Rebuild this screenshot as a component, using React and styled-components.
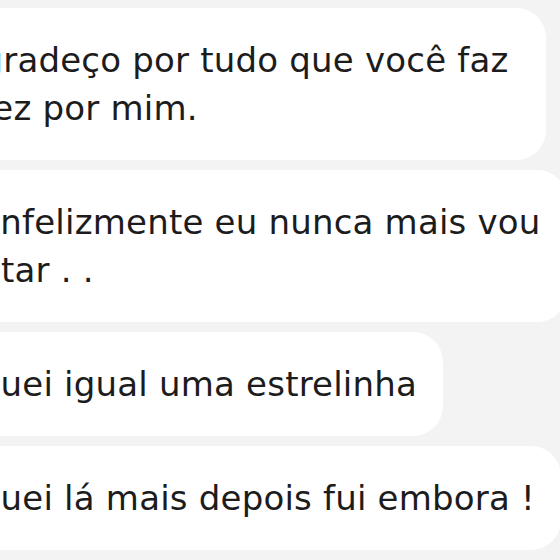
import React from "react";
import styled, { createGlobalStyle } from "styled-components";

const GlobalStyle = createGlobalStyle`
  html, body {
    margin: 0;
    padding: 0;
    background: #f3f3f3;
    overflow: hidden;
  }
`;

// the screenshot is cropped: the bubbles start off the left edge
const Thread = styled.div`
  display: flex;
  flex-direction: column;
  align-items: flex-start;
  gap: 10px;
  padding-top: 8px;
  margin-left: -70px;
  width: 640px;
`;

const Bubble = styled.div`
  background: #ffffff;
  border-radius: 30px;
  padding: 28px 26px 28px 28px;
  font-family: "DejaVu Sans", "Liberation Sans", sans-serif;
  font-size: 34px;
  line-height: 48px;
  letter-spacing: 0.2px;
  color: #1c1c1c;
  white-space: pre;
`;

const Line = styled.span`
  display: block;
  margin-left: ${(p) => p.$shift || 0}px;
`;

const messages = [
  [["Agradeço por tudo que você faz "], ["e fez por mim.", -10]],
  [["E infelizmente eu nunca mais vou"], ["voltar . .", -8]],
  [["fiquei igual uma estrelinha", -1]],
  [["fiquei lá mais depois fui embora !", -1]],
];

export default function App() {
  return (
    <>
      <GlobalStyle />
      <Thread>
        {messages.map((lines, i) => (
          <Bubble key={i}>
            {lines.map(([text, shift], j) => (
              <Line key={j} $shift={shift}>
                {text}
              </Line>
            ))}
          </Bubble>
        ))}
      </Thread>
    </>
  );
}
